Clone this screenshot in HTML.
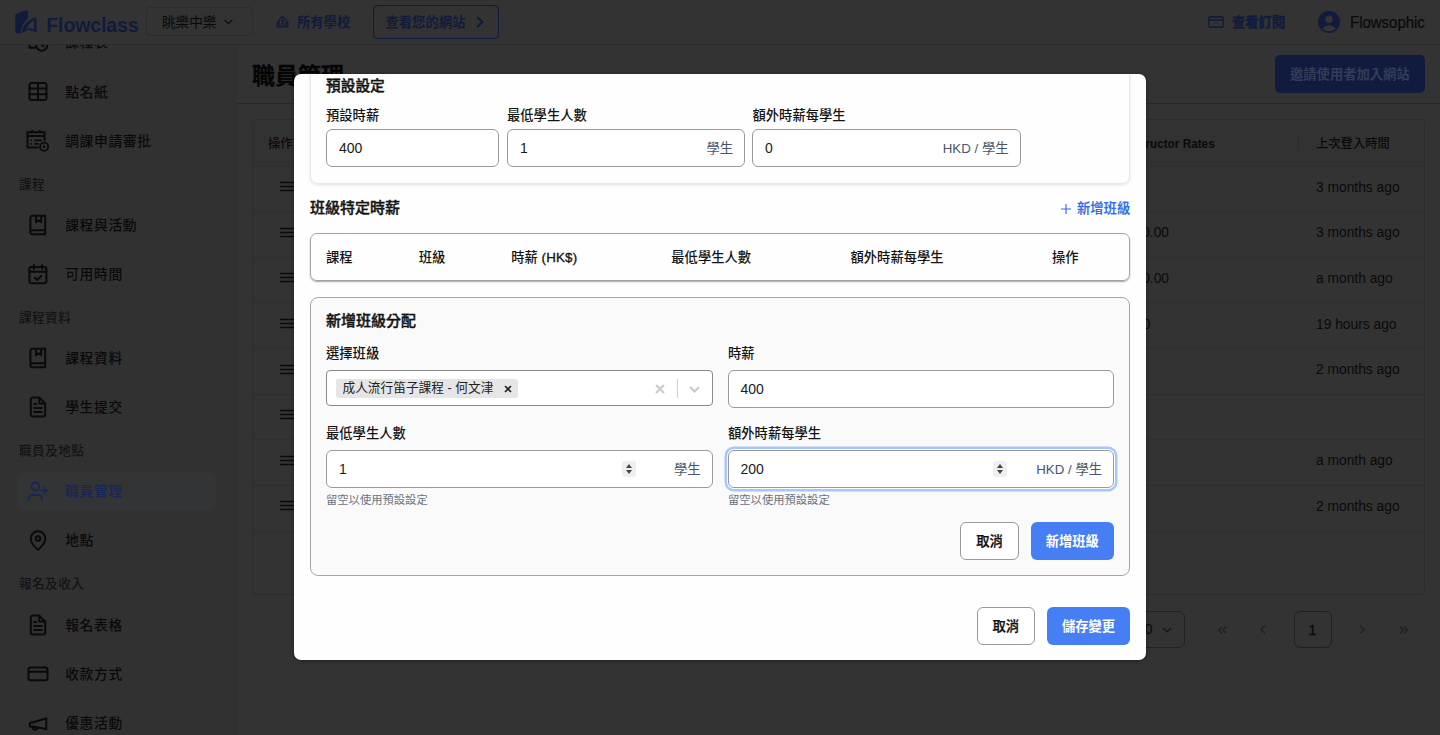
<!DOCTYPE html>
<html lang="zh-Hant">
<head>
<meta charset="utf-8">
<title>職員管理 - Flowclass</title>
<style>
*{box-sizing:border-box;margin:0;padding:0}
html,body{width:1440px;height:735px;overflow:hidden;background:#333333}
body{font-family:"Liberation Sans","Noto Sans CJK TC",sans-serif;color:#0a0a0a;position:relative;-webkit-font-smoothing:antialiased}
.abs{position:absolute}
svg{display:block;overflow:visible}
/* ---------- top bar ---------- */
#topbar{position:absolute;left:0;top:0;width:1440px;height:44.5px;background:#333333;border-bottom:1px solid #2b2b2b;z-index:5}
#topbar .t{position:absolute;white-space:nowrap;line-height:1}
/* ---------- sidebar ---------- */
#side{position:absolute;left:0;top:44px;width:236px;height:691px;background:#313131;border-right:1px solid #2e2e2e;overflow:hidden}
.si{position:absolute;left:18px;width:198px;height:38px;border-radius:6px}
.si svg{position:absolute;left:7.5px;top:6.6px;width:24px;height:24px;stroke:#0a0a0a;fill:none;stroke-width:2;stroke-linecap:round;stroke-linejoin:round}
.si span{position:absolute;left:47.2px;top:1.2px;line-height:38px;font-size:13.8px;letter-spacing:.6px;font-weight:500;color:#0a0a0a;white-space:nowrap}
.si.on{background:#333435}
.si.on span{color:#17265a}
.si.on svg{stroke:#17265a;stroke-width:1.85}
.sl{position:absolute;left:19px;font-size:12.6px;letter-spacing:.45px;line-height:16px;font-weight:500;color:#141414;white-space:nowrap}
/* ---------- main (dimmed) ---------- */
#main{position:absolute;left:237px;top:44px;width:1203px;height:691px;background:#333333}
.bt{position:absolute;white-space:nowrap;color:#0a0a0a;line-height:1}
/* ---------- modal ---------- */
#modal{position:absolute;left:294px;top:74px;width:852px;height:586.4px;background:#fefefe;border-radius:7px;overflow:hidden;box-shadow:0 1px 4px rgba(0,0,0,.35);z-index:10;color:#111}
#modal .t{position:absolute;white-space:nowrap;line-height:1;color:#141414}
.lab{font-size:13.3px;font-weight:500}
.inp{position:absolute;background:#fff;border:1px solid #9a9a9a;border-radius:6px}
.inp .v{position:absolute;left:12px;top:50%;transform:translateY(-50%);font-size:14px;line-height:1;color:#1a1a1a}
.inp .sfx{position:absolute;right:11px;top:50%;margin-top:.8px;transform:translateY(-50%);font-size:13.3px;line-height:1;color:#4a5568;white-space:nowrap}
.btn{position:absolute;border-radius:6px;font-size:13.3px;font-weight:700;text-align:center;white-space:nowrap}
.btn.w{background:#fff;border:1px solid #9a9a9a;color:#111;font-weight:500;-webkit-text-stroke:.25px #111}
.btn.b{background:#467ef4;color:#fff}
.spin{position:absolute;width:14px;height:16px;border-radius:3px;background:#efefef}
.spin:before,.spin:after{content:"";position:absolute;left:4px;border-left:3px solid transparent;border-right:3px solid transparent}
.spin:before{top:3px;border-bottom:4px solid #444}
.spin:after{bottom:3px;border-top:4px solid #444}
</style>
</head>
<body>

<!-- ================= TOP BAR ================= -->
<div id="topbar">
  <svg class="abs" style="left:15px;top:10px" width="22" height="24" viewBox="0 0 22 24">
    <path d="M.3 5.300Q.3 4.200 1.750 3.700L10.300 .400Q12.900-.300 12.900 1.800V8.600Q7 13.500 5.600 23.150H2.200Q.3 23.150.3 21.700Z" fill="#101b3d"/>
    <path d="M6.600 22.700Q8.500 11 21.300 7.100L21.700 22.300 13.900 19.750Z" fill="#101b3d"/>
    <path d="M11 20.100Q12.700 13.600 19.200 10.200V18.900L13.900 18.200Z" fill="#333333"/>
  </svg>
  <div class="t" style="left:46.3px;top:15.5px;font-size:19.5px;font-weight:700;color:#101b3d;letter-spacing:-0.1px;transform:scaleY(1.06);transform-origin:0 50%">Flowclass</div>
  <div class="abs" style="left:145.5px;top:7px;width:107px;height:29px;border:1px solid #2c2c2c;border-radius:4px;background:#333333"></div>
  <div class="t" style="left:162px;top:15.8px;font-size:13.6px;color:#0a0a0a">眺樂中樂</div>
  <svg class="abs" style="left:224px;top:19px" width="9" height="6" viewBox="0 0 9 6"><path d="M0.7 0.8 L4.5 4.6 L8.3 0.8" fill="none" stroke="#0a0a0a" stroke-width="1.1"/></svg>

  <svg class="abs" style="left:276px;top:15.2px" width="13" height="13" viewBox="0 0 26 24" preserveAspectRatio="none" fill="none" stroke="#101b3d" stroke-width="2.6" stroke-linejoin="round"><path d="M6 22V8.500l7-6 7 6V22M6 13H2.500v9M20 13h3.500v9M1 22h24M10.500 22v-4.500a2.500 2.500 0 0 1 5 0V22"/><circle cx="13" cy="10.500" r="1.800"/></svg>
  <div class="t" style="left:297px;top:15.8px;font-size:13.3px;font-weight:700;color:#101b3d">所有學校</div>

  <div class="abs" style="left:372.5px;top:5px;width:126px;height:33.5px;border:1px solid #101b3d;border-radius:4px"></div>
  <div class="t" style="left:385.5px;top:16px;font-size:13.3px;font-weight:700;color:#101b3d">查看您的網站</div>
  <svg class="abs" style="left:475.5px;top:16px" width="8" height="12" viewBox="0 0 8 12"><path d="M1.2 1 L6.4 6 L1.2 11" fill="none" stroke="#101b3d" stroke-width="2"/></svg>

  <svg class="abs" style="left:1207.7px;top:15.8px" width="16" height="12" viewBox="0 0 16 12" fill="none" stroke="#101b3d" stroke-width="1.4"><rect x="0.7" y="0.7" width="14.6" height="10.6" rx="1.8"/><path d="M0.7 4.2H15.3"/></svg>
  <div class="t" style="left:1232px;top:15.8px;font-size:13.3px;font-weight:700;-webkit-text-stroke:.3px #101b3d;color:#101b3d">查看訂閱</div>

  <svg class="abs" style="left:1317.5px;top:11px" width="22" height="22" viewBox="0 0 21 21"><circle cx="10.5" cy="10.5" r="10.5" fill="#101b3d"/><circle cx="10.5" cy="8" r="3.6" fill="#333333"/><path d="M3.8 16.6 Q10.5 10.6 17.2 16.6 Q14.5 19.4 10.5 19.4 Q6.5 19.4 3.8 16.6Z" fill="#333333"/></svg>
  <div class="t" style="left:1349.5px;top:15.2px;font-size:16px;color:#0a0a0a;-webkit-text-stroke:.2px #0a0a0a;transform:scaleX(.935);transform-origin:0 50%">Flowsophic</div>
</div>

<!-- ================= SIDEBAR ================= -->
<div id="side">
  <div class="si" style="top:-21.3px"><svg viewBox="0 0 24 24"><path d="M3.500 5.500h15v4M3.500 5.500v13.200h5.500M7.500 3v4M14.500 3v4"/><circle cx="15.800" cy="16.200" r="5.500"/><path d="M15.800 13.500v2.700l1.500 1"/></svg><span>課程表</span></div>
  <div class="si" style="top:29px"><svg viewBox="0 0.800 24 24"><rect x="3.500" y="3.700" width="17" height="17" rx="2.500"/><path d="M12 3.700v17M3.500 9.400h17M3.500 15h17"/></svg><span>點名紙</span></div>
  <div class="si" style="top:78px"><svg viewBox="0 0.800 24 24"><path d="M12.500 19.300H1.500V4.100h17v8.500M1.500 7.800h17M6.200 1.800v2.300M13.700 1.800v2.300" stroke-linecap="butt" stroke-linejoin="miter"/><path d="M4.600 12.100h1.400M8.300 12.100h7.500M4.600 15.600h1.400M8.300 15.600h4.500" stroke-linecap="butt" stroke-width="1.700"/><circle cx="18.100" cy="18.600" r="4.100" stroke-width="1.800"/><path d="M17 16.700v3.800l3-1.900z" fill="#0a0a0a" stroke="none"/></svg><span>調課申請審批</span></div>
  <div class="sl" style="top:133px">課程</div>
  <div class="si" style="top:162px"><svg viewBox="0 0 24 24"><path d="M4.400 19.300V4.700a2 2 0 0 1 2-2h12.800v18.500H6.400a2 2 0 0 1-2-2 2 2 0 0 1 2-2h12.800M10 2.700v6.500l2.600-2 2.600 2V2.700" stroke-linecap="butt"/></svg><span>課程與活動</span></div>
  <div class="si" style="top:211px"><svg viewBox="0 0 24 24"><rect x="3.400" y="5" width="17" height="16.300" rx="2.300"/><path d="M3.400 9.800h17M7.800 2.900v4M16.200 2.900v4M8.800 15.800l2.300 2.200 4.200-4.100"/></svg><span>可用時間</span></div>
  <div class="sl" style="top:266px">課程資料</div>
  <div class="si" style="top:295px"><svg viewBox="0 0 24 24"><path d="M4.400 19.300V4.700a2 2 0 0 1 2-2h12.800v18.500H6.400a2 2 0 0 1-2-2 2 2 0 0 1 2-2h12.800M10 2.700v6.500l2.600-2 2.600 2V2.700" stroke-linecap="butt"/></svg><span>課程資料</span></div>
  <div class="si" style="top:344px"><svg viewBox="0 0 24 24"><path d="M13.300 2.600H6.800a2 2 0 0 0-2 2v14.800a2 2 0 0 0 2 2h10.400a2 2 0 0 0 2-2V8.500zM13.300 2.600v5.900h5.900M8.300 13h7.400M8.300 17h7.400M8.300 9h2"/></svg><span>學生提交</span></div>
  <div class="sl" style="top:399px">職員及地點</div>
  <div class="si on" style="top:428px"><svg viewBox="0 0 24 24"><circle cx="9.300" cy="7.400" r="3.900"/><path d="M2.700 21.200v-1.500a3.900 3.900 0 0 1 3.900-3.900h5.400a3.900 3.900 0 0 1 3.900 3.900v1.500M18.700 8.400v6M15.700 11.400h6"/></svg><span>職員管理</span></div>
  <div class="si" style="top:477px"><svg viewBox="0 0 24 24"><path d="M12 21.800s-7.300-6-7.300-11.300a7.300 7.300 0 0 1 14.600 0c0 5.300-7.300 11.300-7.300 11.300z"/><circle cx="12" cy="10.500" r="2.300"/></svg><span>地點</span></div>
  <div class="sl" style="top:532px">報名及收入</div>
  <div class="si" style="top:562px"><svg viewBox="0 0 24 24"><path d="M13.300 2.600H6.800a2 2 0 0 0-2 2v14.800a2 2 0 0 0 2 2h10.400a2 2 0 0 0 2-2V8.500zM13.300 2.600v5.900h5.900M8.300 13h7.400M8.300 17h7.400M8.300 9h2"/></svg><span>報名表格</span></div>
  <div class="si" style="top:611px"><svg viewBox="0 0 24 24"><rect x="2.500" y="5.500" width="19" height="12.700" rx="2.200"/><path d="M2.500 9.700h19"/></svg><span>收款方式</span></div>
  <div class="si" style="top:660px"><svg viewBox="0 0 24 24"><path d="M20.300 7.300V18.100L8.500 15.800H5.300A1.600 1.600 0 0 1 3.700 14.200V13A1.600 1.600 0 0 1 5.300 11.400H6.500ZM6.700 16.300a2.500 2.500 0 0 0 4.800.700" stroke-linejoin="miter"/></svg><span>優惠活動</span></div>
</div>

<!-- ================= MAIN (dimmed page) ================= -->
<div id="main">
  <div class="bt" style="left:15px;top:21.3px;font-size:23px;font-weight:700;color:#050505;-webkit-text-stroke:.3px #050505">職員管理</div>
  <div class="abs" style="left:0;top:58.7px;width:1203px;height:1px;background:#272727"></div>
  <div class="abs" style="left:1037.500px;top:11px;width:150px;height:38px;border-radius:5px;background:#111b3e"></div>
  <div class="bt" style="left:1053px;top:23.500px;font-size:13.300px;font-weight:700;color:#343c58">邀請使用者加入網站</div>

  <!-- grid -->
  <div class="abs" id="grid" style="left:15px;top:75px;width:1172.500px;height:475.500px;border:1px solid #2c2c2c;border-radius:4px">
    <div class="abs" style="left:0;top:0;width:100%;height:46.500px;background:#323232;border-bottom:1px solid #2e2e2e"></div>
    <div class="bt" style="left:15px;top:18px;font-size:12.300px;font-weight:500">操作</div>
    <div class="bt" style="right:208.5px;top:16.5px;font-size:13px;font-weight:700;transform:scaleX(.905);transform-origin:100% 50%">Instructor Rates</div>
    <div class="abs" style="left:1045px;top:16px;width:1px;height:14px;background:#2b2b2b"></div>
    <div class="bt" style="left:1063px;top:17.8px;font-size:12.300px;font-weight:500">上次登入時間</div>
    <div class="abs" style="left:0;top:91.14px;width:100%;height:1px;background:#2e2e2e"></div>
    <svg class="abs" style="left:27.2px;top:61.00px" width="15" height="11" viewBox="0 0 15 11"><path d="M0 1.500H15M0 5.500H15M0 9.500H15" stroke="#0a0a0a" stroke-width="1.600"/></svg>
    <div class="bt" style="left:1063px;top:60.60px;font-size:13.800px">3 months ago</div>
    <div class="abs" style="left:0;top:136.78px;width:100%;height:1px;background:#2e2e2e"></div>
    <svg class="abs" style="left:27.2px;top:106.64px" width="15" height="11" viewBox="0 0 15 11"><path d="M0 1.500H15M0 5.500H15M0 9.500H15" stroke="#0a0a0a" stroke-width="1.600"/></svg>
    <div class="bt" style="right:254.500px;top:106.24px;font-size:13.800px">HK$400.00</div>
    <div class="bt" style="left:1063px;top:106.24px;font-size:13.800px">3 months ago</div>
    <div class="abs" style="left:0;top:182.42px;width:100%;height:1px;background:#2e2e2e"></div>
    <svg class="abs" style="left:27.2px;top:152.28px" width="15" height="11" viewBox="0 0 15 11"><path d="M0 1.500H15M0 5.500H15M0 9.500H15" stroke="#0a0a0a" stroke-width="1.600"/></svg>
    <div class="bt" style="right:254.500px;top:151.88px;font-size:13.800px">HK$350.00</div>
    <div class="bt" style="left:1063px;top:151.88px;font-size:13.800px">a month ago</div>
    <div class="abs" style="left:0;top:228.06px;width:100%;height:1px;background:#2e2e2e"></div>
    <svg class="abs" style="left:27.2px;top:197.92px" width="15" height="11" viewBox="0 0 15 11"><path d="M0 1.500H15M0 5.500H15M0 9.500H15" stroke="#0a0a0a" stroke-width="1.600"/></svg>
    <div class="bt" style="right:254.500px;top:197.52px;font-size:13.800px;margin-right:18.500px">HK$380</div>
    <div class="bt" style="left:1063px;top:197.52px;font-size:13.800px">19 hours ago</div>
    <div class="abs" style="left:0;top:273.70px;width:100%;height:1px;background:#2e2e2e"></div>
    <svg class="abs" style="left:27.2px;top:243.56px" width="15" height="11" viewBox="0 0 15 11"><path d="M0 1.500H15M0 5.500H15M0 9.500H15" stroke="#0a0a0a" stroke-width="1.600"/></svg>
    <div class="bt" style="left:1063px;top:243.16px;font-size:13.800px">2 months ago</div>
    <div class="abs" style="left:0;top:319.34px;width:100%;height:1px;background:#2e2e2e"></div>
    <svg class="abs" style="left:27.2px;top:289.20px" width="15" height="11" viewBox="0 0 15 11"><path d="M0 1.500H15M0 5.500H15M0 9.500H15" stroke="#0a0a0a" stroke-width="1.600"/></svg>
    <div class="abs" style="left:0;top:364.98px;width:100%;height:1px;background:#2e2e2e"></div>
    <svg class="abs" style="left:27.2px;top:334.84px" width="15" height="11" viewBox="0 0 15 11"><path d="M0 1.500H15M0 5.500H15M0 9.500H15" stroke="#0a0a0a" stroke-width="1.600"/></svg>
    <div class="bt" style="left:1063px;top:334.44px;font-size:13.800px">a month ago</div>
    <div class="abs" style="left:0;top:410.62px;width:100%;height:1px;background:#2e2e2e"></div>
    <svg class="abs" style="left:27.2px;top:380.48px" width="15" height="11" viewBox="0 0 15 11"><path d="M0 1.500H15M0 5.500H15M0 9.500H15" stroke="#0a0a0a" stroke-width="1.600"/></svg>
    <div class="bt" style="left:1063px;top:380.08px;font-size:13.800px">2 months ago</div>
  </div>
  <!-- pagination -->
  <div class="abs" style="left:880px;top:566.500px;width:67.500px;height:37px;border:1px solid #222;border-radius:6px"></div>
  <div class="bt" style="left:900px;top:578px;font-size:14px">10</div>
  <svg class="abs" style="left:924.500px;top:582.500px" width="10" height="6" viewBox="0 0 10 6"><path d="M1 1L5 5L9 1" fill="none" stroke="#151515" stroke-width="1.200"/></svg>
  <svg class="abs" style="left:981px;top:581.500px" width="9" height="8" viewBox="0 0 9 8" fill="none" stroke="#1d1d1d" stroke-width="1.100"><path d="M4 .700L.800 4 4 7.300M8 .700L4.800 4 8 7.300"/></svg>
  <svg class="abs" style="left:1023px;top:581px" width="6" height="9" viewBox="0 0 6 9" fill="none" stroke="#1d1d1d" stroke-width="1.100"><path d="M5 .700L1 4.500 5 8.300"/></svg>
  <div class="abs" style="left:1056.500px;top:566.500px;width:38px;height:37px;border:1px solid #212121;border-radius:6px"></div>
  <div class="bt" style="left:1071.500px;top:578.500px;font-size:14px;-webkit-text-stroke:.3px #0a0a0a">1</div>
  <svg class="abs" style="left:1122px;top:581px" width="6" height="9" viewBox="0 0 6 9" fill="none" stroke="#1d1d1d" stroke-width="1.100"><path d="M1 .700L5 4.500 1 8.300"/></svg>
  <svg class="abs" style="left:1161.500px;top:581.500px" width="9" height="8" viewBox="0 0 9 8" fill="none" stroke="#1d1d1d" stroke-width="1.100"><path d="M1 .700L4.200 4 1 7.300M5 .700L8.200 4 5 7.300"/></svg>

</div>

<!-- ================= MODAL ================= -->
<div id="modal">
  <!-- default settings card (scrolled, top cut) -->
  <div class="abs" style="left:16px;top:-40px;width:820px;height:149.5px;border:1px solid #e5e7eb;border-radius:8px;box-shadow:0 1px 3px rgba(0,0,0,.12)"></div>
  <div class="t" style="left:32px;top:4.5px;font-size:14.7px;font-weight:500;-webkit-text-stroke:.4px #141414">預設設定</div>
  <div class="t lab" style="left:32px;top:34.5px">預設時薪</div>
  <div class="t lab" style="left:213px;top:34.5px">最低學生人數</div>
  <div class="t lab" style="left:458.5px;top:34.5px">額外時薪每學生</div>
  <div class="inp" style="left:32px;top:55px;width:172.500px;height:38px"><span class="v">400</span></div>
  <div class="inp" style="left:213px;top:55px;width:238px;height:38px"><span class="v">1</span><span class="sfx">學生</span></div>
  <div class="inp" style="left:458px;top:55px;width:268.5px;height:38px"><span class="v">0</span><span class="sfx">HKD / 學生</span></div>

  <!-- class-specific rates -->
  <div class="t" style="left:16px;top:125.5px;font-size:15px;font-weight:500;-webkit-text-stroke:.4px #141414">班級特定時薪</div>
  <svg class="abs" style="left:767px;top:129.5px" width="10" height="10" viewBox="0 0 10 10"><path d="M5 0V10M0 5H10" stroke="#2f6bed" stroke-width="1.150"/></svg>
  <div class="t" style="left:783px;top:127.5px;font-size:13.300px;font-weight:500;-webkit-text-stroke:.2px #2f6bed;color:#2f6bed">新增班級</div>

  <div class="abs" style="left:16px;top:159px;width:820px;height:47.500px;border:1px solid #a3a3a3;border-radius:7px;box-shadow:0 1px 1.500px rgba(0,0,0,.35)"></div>
  <div class="t lab" style="left:32px;top:176.5px">課程</div>
  <div class="t lab" style="left:124.7px;top:176.5px">班級</div>
  <div class="t lab" style="left:217.3px;top:176.5px">時薪 <span style="-webkit-text-stroke:.35px #141414;letter-spacing:.2px">(HK$)</span></div>
  <div class="t lab" style="left:377.3px;top:176.5px">最低學生人數</div>
  <div class="t lab" style="left:556.5px;top:176.5px">額外時薪每學生</div>
  <div class="t lab" style="left:758px;top:176.5px">操作</div>

  <!-- add class allocation card -->
  <div class="abs" style="left:16px;top:222.5px;width:820px;height:279.500px;border:1px solid #a6a6a6;border-radius:8px;background:#fafafa"></div>
  <div class="t" style="left:32px;top:239px;font-size:15px;font-weight:500;-webkit-text-stroke:.4px #141414">新增班級分配</div>
  <div class="t lab" style="left:32px;top:272.5px">選擇班級</div>
  <div class="t lab" style="left:434px;top:272.5px">時薪</div>

  <div class="inp" style="left:32px;top:296px;width:386.500px;height:35.800px;border-color:#8a8a8a;border-radius:4px">
    <div class="abs" style="left:9px;top:7.500px;width:182px;height:19px;background:#e6e6e6;border-radius:2px"></div>
    <div class="t" style="left:15.500px;top:11px;font-size:12.700px;color:#222">成人流行笛子課程 - 何文津</div>
    <svg class="abs" style="left:176.500px;top:13.500px" width="8" height="8" viewBox="0 0 8 8"><path d="M1 1L7 7M7 1L1 7" stroke="#222" stroke-width="1.700"/></svg>
    <svg class="abs" style="left:328px;top:12.500px" width="10" height="10" viewBox="0 0 10 10"><path d="M1 1L9 9M9 1L1 9" stroke="#c9c9c9" stroke-width="2"/></svg>
    <div class="abs" style="left:349.500px;top:8px;width:1px;height:19px;background:#cfcfcf"></div>
    <svg class="abs" style="left:362px;top:15px" width="11" height="7" viewBox="0 0 11 7"><path d="M1 1L5.500 5.500L10 1" fill="none" stroke="#c9c9c9" stroke-width="2"/></svg>
  </div>
  <div class="inp" style="left:433.5px;top:296px;width:386.500px;height:37.800px"><span class="v">400</span></div>

  <div class="t lab" style="left:32px;top:353px">最低學生人數</div>
  <div class="t lab" style="left:434px;top:353px">額外時薪每學生</div>

  <div class="inp" style="left:32px;top:376px;width:386.500px;height:37.800px"><span class="v">1</span><span class="sfx">學生</span><div class="spin" style="left:294.500px;top:10px"></div></div>
  <div class="inp" style="left:433.5px;top:376px;width:386.500px;height:37.800px;box-shadow:0 0 0 1px #fff,0 0 0 3.500px #a5c7fb"><span class="v">200</span><span class="sfx">HKD / 學生</span><div class="spin" style="left:264.500px;top:10px"></div></div>

  <div class="t" style="left:32px;top:420.5px;font-size:11.300px;color:#6b7280">留空以使用預設設定</div>
  <div class="t" style="left:434px;top:420.5px;font-size:11.300px;color:#6b7280">留空以使用預設設定</div>

  <div class="btn w" style="left:666px;top:448px;width:59px;height:38px;line-height:38px">取消</div>
  <div class="btn b" style="left:736.5px;top:448px;width:83.500px;height:38px;line-height:40px">新增班級</div>

  <!-- footer -->
  <div class="btn w" style="left:682.5px;top:533px;width:58.500px;height:37.800px;line-height:38px">取消</div>
  <div class="btn b" style="left:752.7px;top:533px;width:83.700px;height:37.800px;line-height:40px">儲存變更</div>
</div>

</body>
</html>
